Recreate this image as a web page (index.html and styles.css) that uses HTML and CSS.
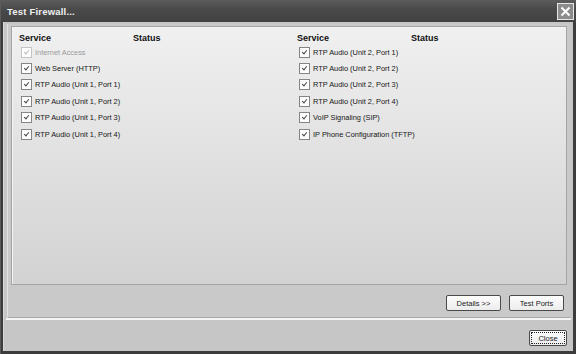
FILE: index.html
```html
<!DOCTYPE html>
<html lang="en">
<head>
    <meta charset="UTF-8">
    <title>Test Firewall...</title>
    <link rel="stylesheet" href="styles.css">
</head>
<body>
    <div class="window">
        <div class="titlebar">
            <span class="title">Test Firewall...</span>
            <span class="close-x">
                <svg width="17" height="17" viewBox="0 0 17 17">
                    <rect x="0.5" y="0.5" width="16" height="16" fill="#8c8c8c" stroke="#e6e6e6"/>
                    <path d="M4.5 4.5 L12.5 12.5 M12.5 4.5 L4.5 12.5" stroke="#fff" stroke-width="2"/>
                </svg>
            </span>
        </div>
        <div class="content">
            <div class="panel">
                <div class="group">
                    <div class="column">
                        <div class="col-head"><span class="h-service">Service</span><span>Status</span></div>
                        <label class="row disabled"><span class="box"></span>Internet Access</label>
                        <label class="row"><span class="box"></span>Web Server (HTTP)</label>
                        <label class="row"><span class="box"></span>RTP Audio (Unit 1, Port 1)</label>
                        <label class="row"><span class="box"></span>RTP Audio (Unit 1, Port 2)</label>
                        <label class="row"><span class="box"></span>RTP Audio (Unit 1, Port 3)</label>
                        <label class="row"><span class="box"></span>RTP Audio (Unit 1, Port 4)</label>
                    </div>
                    <div class="column">
                        <div class="col-head"><span class="h-service">Service</span><span>Status</span></div>
                        <label class="row"><span class="box"></span>RTP Audio (Unit 2, Port 1)</label>
                        <label class="row"><span class="box"></span>RTP Audio (Unit 2, Port 2)</label>
                        <label class="row"><span class="box"></span>RTP Audio (Unit 2, Port 3)</label>
                        <label class="row"><span class="box"></span>RTP Audio (Unit 2, Port 4)</label>
                        <label class="row"><span class="box"></span>VoIP Signaling (SIP)</label>
                        <label class="row"><span class="box"></span>IP Phone Configuration (TFTP)</label>
                    </div>
                </div>
                <div class="actions">
                    <button class="btn">Details &gt;&gt;</button>
                    <button class="btn">Test Ports</button>
                </div>
            </div>
            <div class="footer">
                <button class="btn btn-close">Close</button>
            </div>
        </div>
    </div>
</body>
</html>
```

FILE: styles.css
```css
body {
    margin: 0;
    padding: 0;
    font-family: "Liberation Sans", Arial, sans-serif;
    background: #3a3a3a;
}

.window {
    width: 576px;
    height: 354px;
    display: flex;
    flex-direction: column;
    background: #3c3c3c;
    box-sizing: border-box;
    border-left: 1px solid #5a5a5a;
}

.titlebar {
    height: 22px;
    flex: none;
    display: flex;
    align-items: center;
    justify-content: space-between;
    padding: 0 2px 0 6px;
    background: linear-gradient(#5c5c5c, #4a4a4a 40%, #424242);
}

.title {
    color: #f0f0f0;
    font-size: 9.5px;
    font-weight: bold;
    letter-spacing: 0.2px;
}

.close-x {
    display: flex;
    margin-top: 1px;
}

.content {
    flex: 1;
    margin: 0 3px 3px 2px;
    background: #c6c6c6;
    display: flex;
    flex-direction: column;
    border-left: 1px solid #d8d8d8;
}

.panel {
    margin: 2px 3px 0 3px;
    height: 294px;
    box-sizing: border-box;
    border-left: 1px solid #e2e2e2;
    border-bottom: 1px solid #a8a8a8;
    background: #c9c9c9;
    padding: 2px 3px 0 3px;
}

.group {
    height: 259px;
    box-sizing: border-box;
    border: 1px solid #a4a4a4;
    box-shadow: inset 1px 1px 0 #f4f4f4;
    background: linear-gradient(#f0f0f0, #e4e4e4 40%, #d2d2d2);
    display: grid;
    grid-template-columns: 278px 1fr;
    align-content: start;
    padding: 4px 0 0 7px;
}

.col-head {
    display: flex;
    align-items: center;
    font-size: 9px;
    font-weight: bold;
    color: #111;
    height: 13px;
}

.h-service {
    width: 114px;
}

.row {
    display: flex;
    align-items: center;
    gap: 3px;
    height: 16.4px;
    padding-left: 2px;
    font-size: 7.4px;
    color: #161616;
}

.box {
    width: 9px;
    height: 9px;
    flex: none;
    border: 1px solid #858585;
    background: #fdfdfd;
    position: relative;
}

.box::after {
    content: "";
    position: absolute;
    left: 2px;
    top: 2px;
    width: 4px;
    height: 2px;
    border-left: 1.5px solid #4a4a4a;
    border-bottom: 1.5px solid #4a4a4a;
    transform: rotate(-50deg);
}

.row.disabled {
    color: #9a9a9a;
}

.row.disabled .box {
    border-color: #c4c4c4;
}

.row.disabled .box::after {
    border-color: #bbb;
}

.actions {
    display: flex;
    justify-content: flex-end;
    gap: 8px;
    padding: 10px 3px 0 0;
}

.btn {
    width: 55px;
    height: 16px;
    padding: 0;
    font-family: "Liberation Sans", Arial, sans-serif;
    font-size: 7.5px;
    color: #1a1a1a;
    background: linear-gradient(#fdfdfd, #ececec);
    border: 1px solid #4a4a4a;
    border-radius: 2px;
}

.footer {
    flex: 1;
    display: flex;
    justify-content: flex-end;
    align-items: flex-start;
    border-top: 2px solid #f4f4f4;
    margin: 0 2px;
    padding: 10px 4px 0 0;
}

.btn-close {
    width: 38px;
    outline: 1px dotted #222;
    outline-offset: -3px;
}
```
